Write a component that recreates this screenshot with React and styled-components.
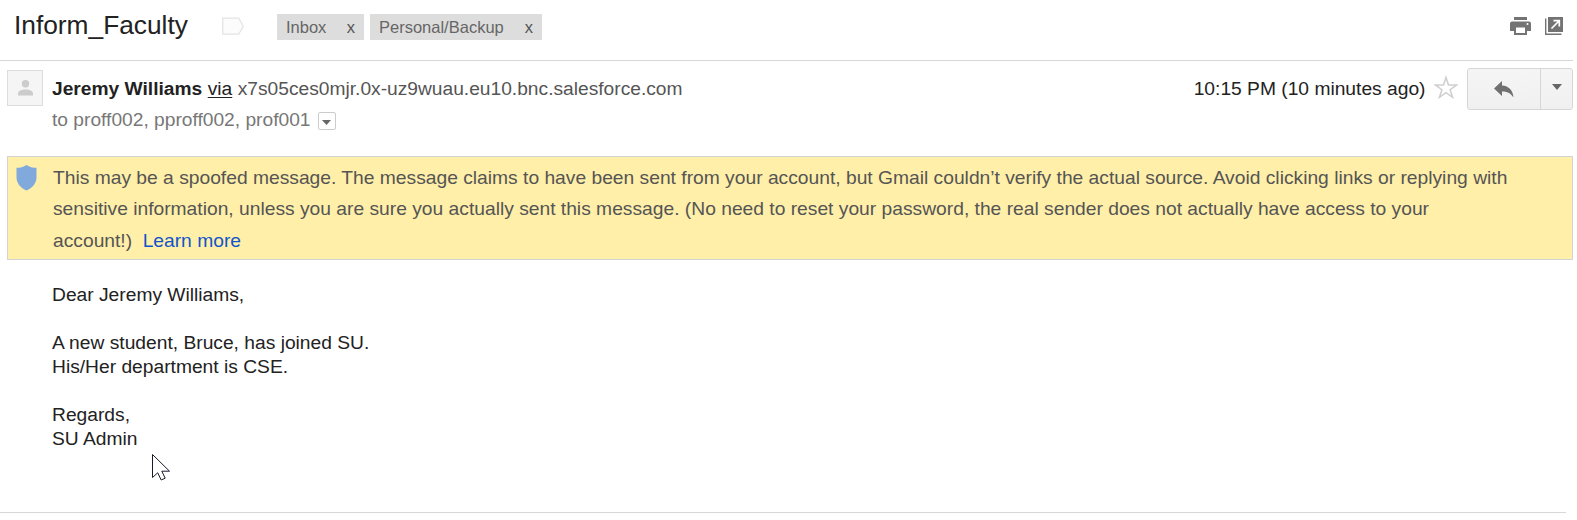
import React from "react";
import styled, { createGlobalStyle } from "styled-components";

const GlobalStyle = createGlobalStyle`
  * { box-sizing: border-box; }
  body {
    margin: 0;
    background: #fff;
    color: #222;
    font-family: "Liberation Sans", Arial, sans-serif;
    font-size: 19.2px;
  }
`;

const Page = styled.main`
  position: relative;
  width: 1573px;
  height: 520px;
  overflow: hidden;
`;

const SubjectBar = styled.header`
  display: flex;
  align-items: flex-start;
  height: 61px;
  padding-left: 14px;
  border-bottom: 1px solid #d8d8d8;
`;

const Subject = styled.h1`
  margin: 9px 0 0;
  width: 208px;
  font-size: 26.3px;
  font-weight: 400;
  line-height: 32px;
  white-space: nowrap;
`;

const Marker = styled.svg`
  display: block;
  flex: none;
  margin-top: 17px;
`;

const Labels = styled.div`
  display: flex;
  gap: 6px;
  margin: 14px 0 0 33px;
`;

const Label = styled.span`
  display: flex;
  justify-content: space-between;
  width: ${(p) => p.$width}px;
  height: 26px;
  padding: 0 9px;
  background: #ddd;
  color: #666;
  font-size: 16.5px;
  line-height: 26px;
`;

const Remove = styled.span`
  color: #555;
`;

const Tools = styled.div`
  display: flex;
  gap: 14px;
  margin: 17px 10px 0 auto;
  svg { display: block; }
`;

const Sender = styled.section`
  display: flex;
  height: 95px;
  padding-left: 7px;
`;

const Avatar = styled.div`
  width: 36px;
  height: 36px;
  margin-top: 9px;
  border: 1px solid #ddd;
  background: #f5f5f5;
  svg { display: block; margin: 9px 0 0 10px; }
`;

const Details = styled.div`
  margin: 16px 0 0 9px;
`;

const DetailLine = styled.div`
  display: flex;
  height: 31px;
  line-height: 24px;
  white-space: pre;
  color: ${(p) => p.$color};
`;

const Name = styled.strong`
  color: #222;
`;

const Via = styled.span`
  margin: 0 5.5px;
  color: #222;
  text-decoration: underline;
  text-decoration-thickness: 1px;
  text-underline-offset: 2px;
`;

const Expand = styled.span`
  display: flex;
  justify-content: center;
  width: 18px;
  height: 18px;
  margin: 4px 0 0 7px;
  padding-top: 7px;
  border: 1px solid #ccc;
  border-radius: 2px;
`;

const Meta = styled.div`
  display: flex;
  margin-left: auto;
`;

const Time = styled.time`
  margin-top: 16px;
  font-size: 19.23px;
  line-height: 24px;
  white-space: nowrap;
`;

const Star = styled.svg`
  margin: 14px 9px 0 8.5px;
`;

const ButtonGroup = styled.div`
  display: flex;
  width: 106px;
  height: 42px;
  margin-top: 7px;
  border: 1px solid #d6d6d6;
  border-radius: 3px;
  background: linear-gradient(#f5f5f5, #f0f0f0);
`;

const ActionButton = styled.button`
  display: flex;
  width: ${(p) => p.$width}px;
  height: 40px;
  padding: ${(p) => p.$inset};
  border: 0;
  border-left: ${(p) => (p.$divided ? "1px solid #d6d6d6" : "0")};
  background: transparent;
`;

const Warning = styled.section`
  display: flex;
  width: 1566px;
  height: 104px;
  margin-left: 7px;
  border: 1px solid #d3d3d3;
  background: #ffefa8;
`;

const Shield = styled.svg`
  flex: none;
  margin: 8px 0 0 8px;
`;

const WarningText = styled.p`
  margin: 5px 0 0 16px;
  color: #555;
  font-size: 19.24px;
  line-height: 31.3px;
  white-space: nowrap;
`;

const Link = styled.a`
  margin-left: 10.5px;
  color: #15c;
`;

const Body = styled.article`
  height: 253px;
  width: 1566px;
  padding: 23px 0 0 52px;
  border-bottom: 1px solid #d8d8d8;
  font-size: 19.23px;
  line-height: 24px;
`;

const Paragraph = styled.p`
  margin: 0 0 24px;
`;

const Cursor = styled.svg`
  position: absolute;
  left: 152px;
  top: 453px;
`;

function Caret({ width, height }) {
  return (
    <svg width={width} height={height} viewBox="0 0 10 6" preserveAspectRatio="none">
      <path d="M0 0h10L5 6z" fill="#666" />
    </svg>
  );
}

export default function App() {
  return (
    <>
      <GlobalStyle />
      <Page>
        <SubjectBar>
          <Subject>Inform_Faculty</Subject>
          <Marker width="22" height="19" viewBox="0 0 22 19">
            <path d="M.75 1.2h16l4.5 8-4.5 8h-16z" fill="#fcfcfc" stroke="#e4e4e4" strokeWidth="1.3" />
          </Marker>
          <Labels>
            <Label $width={87}>Inbox <Remove>x</Remove></Label>
            <Label $width={172}>Personal/Backup <Remove>x</Remove></Label>
          </Labels>
          <Tools>
            <svg width="21" height="18" viewBox="0 0 21 18">
              <path d="M4 0h13v3H4zM2 4.5h17a2 2 0 0 1 2 2V14h-4v4H4v-4H0V6.5a2 2 0 0 1 2-2z" fill="#737373" />
              <path d="M6 10.5h9V16H6z" fill="#fff" />
              <circle cx="17.5" cy="7" r="1" fill="#fff" />
            </svg>
            <svg width="18" height="18" viewBox="0 0 18 18">
              <path d="M3 0h15v15H3z" fill="#737373" />
              <path d="M.7 1.500v15.800h15.800" fill="none" stroke="#737373" strokeWidth="1.4" />
              <path d="M6.500 11.500 14 4M8.500 3.700h5.800V9.500" fill="none" stroke="#fff" strokeWidth="1.7" />
            </svg>
          </Tools>
        </SubjectBar>

        <Sender>
          <Avatar>
            <svg width="15" height="16" viewBox="0 0 15 16">
              <circle cx="7.5" cy="3.8" r="3.7" fill="#ccc" />
              <path d="M0 15.500v-2C0 10.700 4 9.500 7.500 9.500s7.500 1.200 7.500 4v2z" fill="#ccc" />
            </svg>
          </Avatar>
          <Details>
            <DetailLine $color="#555">
              <Name>Jeremy Williams</Name>
              <Via>via</Via>
              <span>x7s05ces0mjr.0x-uz9wuau.eu10.bnc.salesforce.com</span>
            </DetailLine>
            <DetailLine $color="#777">
              <span>to proff002, pproff002, prof001</span>
              <Expand><Caret width={9} height={5} /></Expand>
            </DetailLine>
          </Details>
          <Meta>
            <Time>10:15 PM (10 minutes ago)</Time>
            <Star width="24" height="25" viewBox="0 0 24 25">
              <path d="m12 2.500 2.500 7.500h8l-6.400 4.700 2.400 7.600L12 17.700l-6.500 4.600 2.400-7.600L1.500 10h8z" fill="#fff" stroke="#d0d0d0" strokeWidth="1.6" />
            </Star>
            <ButtonGroup>
              <ActionButton $width={72} $inset="11px 0 0 26px" aria-label="Reply">
                <svg width="20" height="18" viewBox="0 0 20 18">
                  <path d="M0 8.500 8 1v4.500C15 6 19 10.500 19.500 17.500 16.500 13 13 11.500 8 11.500V16z" fill="#707070" />
                </svg>
              </ActionButton>
              <ActionButton $width={32} $divided $inset="15px 0 0 11px" aria-label="More">
                <Caret width={10} height={6} />
              </ActionButton>
            </ButtonGroup>
          </Meta>
        </Sender>

        <Warning>
          <Shield width="21" height="26" viewBox="0 0 21 26">
            <path d="M10.500 0C13.500 2 17 2.800 20.500 2.800v9.700c0 5.500-4 10.500-10 13-6-2.500-10-7.500-10-13V2.800C4 2.800 7.500 2 10.500 0z" fill="#82a9dc" />
          </Shield>
          <WarningText>
            This may be a spoofed message. The message claims to have been sent from your account, but Gmail couldn’t verify the actual source. Avoid clicking links or replying with<br />
            sensitive information, unless you are sure you actually sent this message. (No need to reset your password, the real sender does not actually have access to your<br />
            account!)<Link>Learn more</Link>
          </WarningText>
        </Warning>

        <Body>
          <Paragraph>Dear Jeremy Williams,</Paragraph>
          <Paragraph>A new student, Bruce, has joined SU.<br />His/Her department is CSE.</Paragraph>
          <Paragraph>Regards,<br />SU Admin</Paragraph>
        </Body>

        <Cursor width="19" height="29" viewBox="0 0 19 29">
          <path d="M.5 1.500V24.500l5.200-4.700 3.500 7.200 4-1.800-3.400-7h7.700z" fill="#fff" stroke="#1a1a2a" strokeWidth="1" />
        </Cursor>
      </Page>
    </>
  );
}
